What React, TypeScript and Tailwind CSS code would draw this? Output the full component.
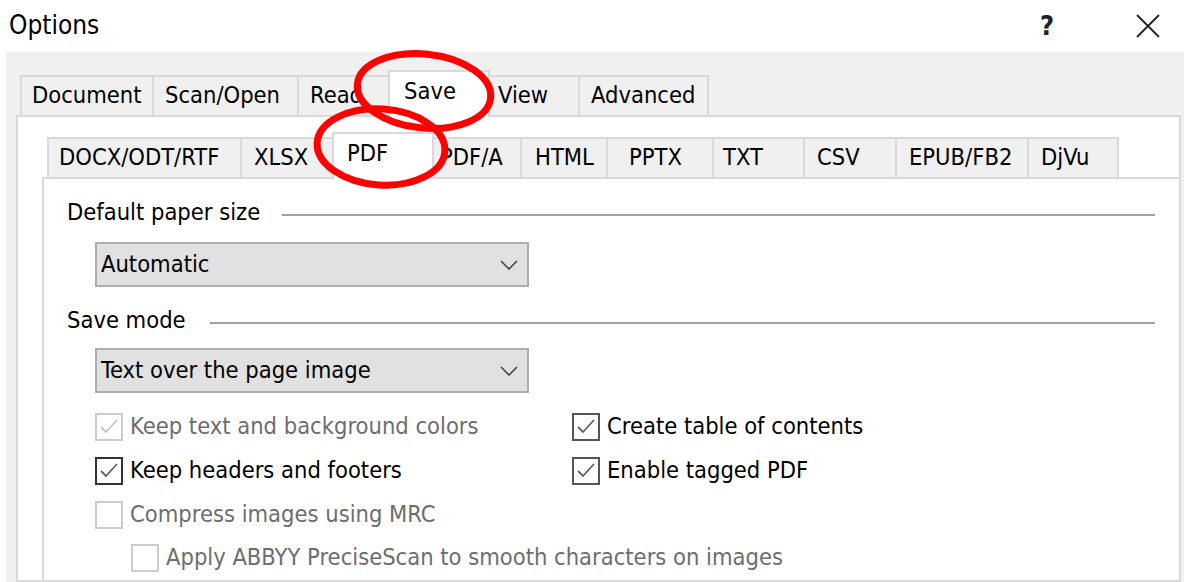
import type { ReactNode } from 'react';

type TabDef = {
  label: string;
  cls: string;
  active?: boolean;
};

const mainTabs: TabDef[] = [
  { label: 'Document', cls: 'w-[134px] pl-[10px]' },
  { label: 'Scan/Open', cls: 'w-[147px] pl-[11px]' },
  { label: 'Read', cls: 'w-[93px] pl-[11px]' },
  { label: 'Save', cls: 'w-[102px] pl-[14px]', active: true },
  { label: 'View', cls: 'w-[92px] pl-[8px]' },
  { label: 'Advanced', cls: 'w-[131px] pl-[11px]' }
];

const formatTabs: TabDef[] = [
  { label: 'DOCX/ODT/RTF', cls: 'w-[195px] pl-[10px]' },
  { label: 'XLSX', cls: 'w-[94px] pl-[12px]' },
  { label: 'PDF', cls: 'w-[102px] pl-[13px]', active: true },
  { label: 'PDF/A', cls: 'w-[90px] pl-[6px]' },
  { label: 'HTML', cls: 'w-[88px] pl-[13px]' },
  { label: 'PPTX', cls: 'w-[108px] pl-[21px]' },
  { label: 'TXT', cls: 'w-[93px] pl-[9px]' },
  { label: 'CSV', cls: 'w-[94px] pl-[12px]' },
  { label: 'EPUB/FB2', cls: 'w-[134px] pl-[12px]' },
  { label: 'DjVu', cls: 'w-[92px] pl-[12px]' }
];

function TabStrip({ tabs }: { tabs: TabDef[] }) {
  return (
    <div className="flex items-end h-[47px]">
      {tabs.map((tab, i) => (
        <div
          key={tab.label}
          className={clsx(
            'flex items-center whitespace-nowrap border-2 border-b-0 border-[#d9d9d9]',
            tab.cls,
            i > 0 && '-ml-[2px]',
            tab.active
              ? 'relative z-10 h-[47px] -mb-[2px] bg-white pb-[5px]'
              : 'h-[40px] bg-[#f0f0f0]'
          )}
        >
          {tab.label}
        </div>
      ))}
    </div>
  );
}

function GroupHeading({ label, lineCls }: { label: string; lineCls: string }) {
  return (
    <div className="flex items-center h-[30px]">
      <span className="whitespace-nowrap">{label}</span>
      <div className={clsx('flex-1 h-[2px] bg-[#a0a0a0] mt-[3px]', lineCls)} />
    </div>
  );
}

function Dropdown({ value }: { value: string }) {
  return (
    <div className="ml-[28px] w-[434px] h-[45px] border-2 border-[#adadad] bg-[#e1e1e1] flex items-center pl-[4px] pr-[9px]">
      <span className="flex-1 whitespace-nowrap">{value}</span>
      <svg width="18" height="10" viewBox="0 0 18 10" className="mt-[1px]">
        <polyline points="1,1 9,9 17,1" fill="none" stroke="#444" strokeWidth="1.6" />
      </svg>
    </div>
  );
}

function Checkbox({
  checked,
  disabled,
  strong,
  children
}: {
  checked?: boolean;
  disabled?: boolean;
  strong?: boolean;
  children: ReactNode;
}) {
  const border = disabled ? 'border-[#cccccc]' : strong ? 'border-[#333333]' : 'border-[#555555]';
  const mark = disabled ? '#c4c4c4' : '#606060';
  return (
    <div className="flex items-center h-[44px] gap-[7px]">
      <div className={clsx('w-[28px] h-[28px] border-2 bg-white flex items-center justify-center', border)}>
        {checked && (
          <svg width="22" height="22" viewBox="0 0 22 22">
            <polyline points="3,11 8,16 19,4" fill="none" stroke={mark} strokeWidth="1.8" />
          </svg>
        )}
      </div>
      <span className={clsx('whitespace-nowrap', disabled ? 'text-[#6d6d6d]' : 'text-black')}>{children}</span>
    </div>
  );
}

export default function App() {
  return (
    <div className="relative w-[1184px] h-[582px] overflow-hidden bg-white flex flex-col font-['DejaVu_Sans',sans-serif] font-stretch-condensed text-[23.5px] text-black leading-none">
      {/* title bar */}
      <div className="h-[52px] flex items-center pl-[9px] pr-[24px] shrink-0">
        <span className="text-[26px] mt-[-2px]">Options</span>
        <div className="ml-auto flex items-center gap-[82px]">
          <span className="text-[27px] font-semibold text-[#222] mt-[-2px]">?</span>
          <svg width="24" height="24" viewBox="0 0 24 24">
            <path d="M1 1L23 23M23 1L1 23" stroke="#222" strokeWidth="1.8" />
          </svg>
        </div>
      </div>

      {/* dialog body */}
      <div className="flex-1 ml-[6px] bg-[#f0f0f0] pl-[10px] pt-[16px] flex flex-col">
        <div className="ml-[4px]">
          <TabStrip tabs={mainTabs} />
        </div>
        <div className="flex-1 w-[1165px] border-2 border-[#d9d9d9] bg-white pl-[24px] pt-[13px] flex flex-col">
          <div className="ml-[5px]">
            <TabStrip tabs={formatTabs} />
          </div>
          <div className="flex-1 border-t-2 border-l-2 border-[#d9d9d9] pl-[23px] pr-[24px] pt-[19px]">
            <GroupHeading label="Default paper size" lineCls="ml-[22px]" />
            <div className="mt-[14px]">
              <Dropdown value="Automatic" />
            </div>
            <div className="mt-[19px]">
              <GroupHeading label="Save mode" lineCls="ml-[24px]" />
            </div>
            <div className="mt-[12px]">
              <Dropdown value="Text over the page image" />
            </div>
            <div className="mt-[12px] ml-[28px] grid grid-cols-[477px_1fr]">
              <Checkbox checked disabled>
                Keep text and background colors
              </Checkbox>
              <Checkbox checked>Create table of contents</Checkbox>
              <Checkbox checked strong>
                Keep headers and footers
              </Checkbox>
              <Checkbox checked>Enable tagged PDF</Checkbox>
              <div className="col-span-2">
                <Checkbox disabled>Compress images using MRC</Checkbox>
              </div>
              <div className="col-span-2 ml-[36px] -mt-[1px]">
                <Checkbox disabled>Apply ABBYY PreciseScan to smooth characters on images</Checkbox>
              </div>
            </div>
          </div>
        </div>
      </div>

      {/* red callout rings */}
      <svg className="absolute inset-0 z-20 pointer-events-none" width="1184" height="582" viewBox="0 0 1184 582">
        <ellipse cx="424" cy="91" rx="67" ry="37" transform="rotate(6 424 91)" fill="none" stroke="#ff0000" strokeWidth="7" />
        <ellipse cx="381" cy="147" rx="64" ry="38" transform="rotate(4 381 147)" fill="none" stroke="#ff0000" strokeWidth="7" />
      </svg>
    </div>
  );
}

function clsx(...parts: (string | false | undefined)[]) {
  return parts.filter(Boolean).join(' ');
}
